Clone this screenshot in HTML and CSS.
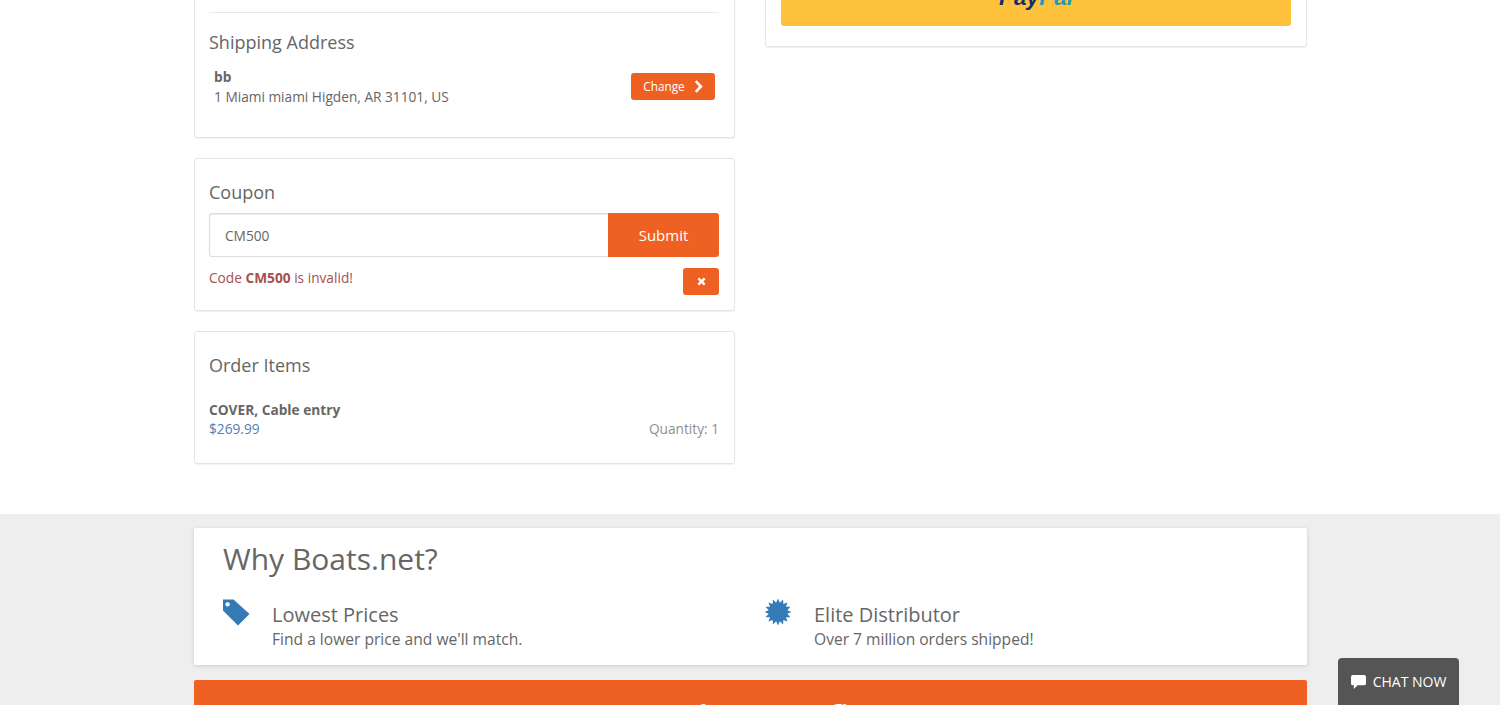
FILE: index.html
```html
<!DOCTYPE html>
<html lang="en">
<head>
  <meta charset="UTF-8" />
  <meta name="viewport" content="width=device-width, initial-scale=1" />
  <title>Checkout</title>
  <link rel="stylesheet" href="styles.css">
</head>
<body>

<div class="checkout">
  <div class="column column-left">
    <div class="panel panel-address">
      <hr class="rule">
      <h3>Shipping Address</h3>
      <div class="address">
        <div>
          <strong>bb</strong><br>
          1 Miami miami Higden, AR 31101, US
        </div>
        <a class="btn btn-small" href="#">Change
          <svg class="chevron" viewBox="0 0 8 12"><path d="M1.5 1 6.2 6 1.5 11" fill="none" stroke="currentColor" stroke-width="2.4"/></svg>
        </a>
      </div>
    </div>

    <div class="panel panel-coupon">
      <h3>Coupon</h3>
      <form class="coupon-form" onsubmit="return false;">
        <input class="coupon-input" type="text" value="CM500">
        <button class="coupon-submit" type="submit">Submit</button>
      </form>
      <div class="coupon-error">
        <p>Code <strong>CM500</strong> is invalid!</p>
        <button class="btn btn-remove" type="button" aria-label="Remove">
          <svg viewBox="0 0 10 10"><path d="M1.5 1.5 8.5 8.5M8.5 1.5 1.5 8.5" fill="none" stroke="currentColor" stroke-width="2.6"/></svg>
        </button>
      </div>
    </div>

    <div class="panel panel-items">
      <h3>Order Items</h3>
      <div class="item">
        <div>
          <strong>COVER, Cable entry</strong><br>
          <span class="price">$269.99</span>
        </div>
        <span class="quantity">Quantity: 1</span>
      </div>
    </div>
  </div>

  <div class="column column-right">
    <div class="panel panel-pay">
      <a class="paypal" href="#"><span class="pay">Pay</span><span class="pal">Pal</span></a>
    </div>
  </div>
</div>

<div class="footer">
  <div class="why">
    <h2>Why Boats.net?</h2>
    <div class="reasons">
      <div class="reason">
        <svg class="reason-icon" viewBox="0 0 28 28"><path fill-rule="evenodd" d="M1 1.500h10.500L27.500 16 16 27.500 1 12.500zM5.600 4.200a2.200 2.200 0 1 0 .01 0z"/></svg>
        <div class="reason-text">
          <h4>Lowest Prices</h4>
          <p>Find a lower price and we'll match.</p>
        </div>
      </div>
      <div class="reason">
        <svg class="reason-icon" viewBox="-1.5 0 28 28"><polygon points="14,.5 15.85,4.68 19.17,1.53 19.28,6.1 23.55,4.45 21.9,8.72 26.47,8.83 23.32,12.15 27.5,14 23.32,15.85 26.47,19.17 21.9,19.28 23.55,23.55 19.28,21.9 19.17,26.47 15.85,23.32 14,27.5 12.15,23.32 8.83,26.47 8.72,21.9 4.45,23.55 6.1,19.28 1.53,19.17 4.68,15.85 .5,14 4.68,12.15 1.53,8.83 6.1,8.72 4.45,4.45 8.72,6.1 8.83,1.53 12.15,4.68" transform="translate(-1.5 0)"/></svg>
        <div class="reason-text">
          <h4>Elite Distributor</h4>
          <p>Over 7 million orders shipped!</p>
        </div>
      </div>
    </div>
  </div>
  <div class="banner">Member Benefits</div>
</div>

<a class="chat" href="#">
  <svg viewBox="0 0 16 15"><path d="M2 0h12a2 2 0 0 1 2 2v7a2 2 0 0 1-2 2H7l-4 4v-4H2a2 2 0 0 1-2-2V2a2 2 0 0 1 2-2z" fill="currentColor"/></svg>
  CHAT NOW
</a>

</body>
</html>
```

FILE: styles.css
```css
html, body { height: 705px; overflow: hidden; }
body { font-family: "Open Sans", sans-serif; margin: 0; padding: 0; background: white; color: #666; font-size: 13.7px; line-height: 20px; }
h2, h3, h4, p { margin: 0; font-weight: normal; }
strong { font-weight: 700; }

.checkout { display: flex; gap: 30px; width: 1113px; height: 514px; margin-left: 194px; }
.column { display: flex; flex-direction: column; gap: 20px; }
.column-left { flex: 0 0 541px; }
.column-right { flex: 0 0 542px; }

.panel { background: white; border: 1px solid #e5e5e5; border-radius: 3px; padding: 0 15px; box-shadow: 0 1px 1px rgba(0,0,0,0.05); box-sizing: border-box; }
.column-left .panel { padding-left: 14px; }
.panel h3 { font-size: 18px; line-height: 26px; color: #666; }

.panel-address, .panel-pay { border-top: none; border-radius: 0 0 3px 3px; }

.panel-address { height: 138px; padding-top: 12px; }
.rule { border: none; border-top: 1px solid #e8e8e8; margin: 0 0 16px; }
.address { display: flex; justify-content: space-between; align-items: center; margin-top: 12px; padding: 0 4px 0 5px; }

.btn { display: inline-flex; align-items: center; justify-content: center; background: #ee6123; color: white; border: none; border-radius: 3px; text-decoration: none; cursor: pointer; }
.btn-small { width: 84px; height: 27px; font-size: 11.8px; gap: 9px; margin-top: -2px; }
.chevron { width: 9px; height: 13px; }

.panel-coupon { height: 153px; padding-top: 20px; }
.coupon-form { display: flex; height: 44px; margin-top: 8px; }
.coupon-input { flex: 1; min-width: 0; box-sizing: border-box; font-family: inherit; font-size: 13.7px; color: #666; padding: 0 15px; border: 1px solid #ddd; border-right: none; border-radius: 3px 0 0 3px; box-shadow: inset 0 1px 1px rgba(0,0,0,0.08); }
.coupon-submit { width: 111px; background: #ee6123; color: white; border: none; border-radius: 0 3px 3px 0; font-family: inherit; font-size: 15px; cursor: pointer; }
.coupon-error { display: flex; justify-content: space-between; align-items: flex-start; margin-top: 11px; color: #a5504e; }
.btn-remove { width: 36px; height: 27px; }
.btn-remove svg { width: 9px; height: 9px; }

.panel-items { height: 133px; padding-top: 20px; }
.item { display: flex; justify-content: space-between; align-items: flex-end; margin-top: 22px; line-height: 19px; }
.price { color: #4f7fb0; }
.quantity { color: #8f8f8f; }

.panel-pay { height: 47px; }
.paypal { display: flex; justify-content: center; align-items: flex-end; height: 26px; background: #ffc23c; border-radius: 0 0 3px 3px; text-decoration: none; font-family: "Liberation Sans", sans-serif; font-style: italic; font-weight: 700; font-size: 22.5px; line-height: 22px; overflow: hidden; padding-bottom: 17px; box-sizing: border-box; }
.pay { color: #0f2f70; }
.pal { color: #1b9bc4; }

.footer { background: #eee; height: 191px; padding-top: 14px; box-sizing: border-box; }
.why { width: 1113px; height: 137px; margin-left: 194px; background: white; border-radius: 2px; padding: 13px 29px 0; box-sizing: border-box; box-shadow: 0 1px 4px rgba(0,0,0,0.15); }
.why h2 { font-size: 30px; line-height: 36px; }
.reasons { display: flex; margin-top: 21px; }
.reason { flex: 0 0 542px; display: flex; gap: 22px; }
.reason-icon { width: 28px; height: 28px; fill: #337ab7; flex: none; margin-left: -1px; }
.reason-text { padding-top: 4px; }
.reason h4 { font-size: 20px; line-height: 26px; }
.reason p { font-size: 15.6px; line-height: 22px; }

.banner { width: 1113px; height: 60px; margin: 15px 0 0 194px; background: #ee6123; color: white; border-radius: 2px; text-align: center; font-size: 30px; font-weight: 600; line-height: 72px; overflow: hidden; }

.chat { position: fixed; right: 41px; bottom: 0; width: 121px; height: 47px; background: #555; color: white; border-radius: 4px 4px 0 0; display: flex; align-items: center; justify-content: center; gap: 7px; font-size: 14px; text-decoration: none; padding-top: 1px; box-sizing: border-box; }
.chat svg { width: 15px; height: 14px; }
```
